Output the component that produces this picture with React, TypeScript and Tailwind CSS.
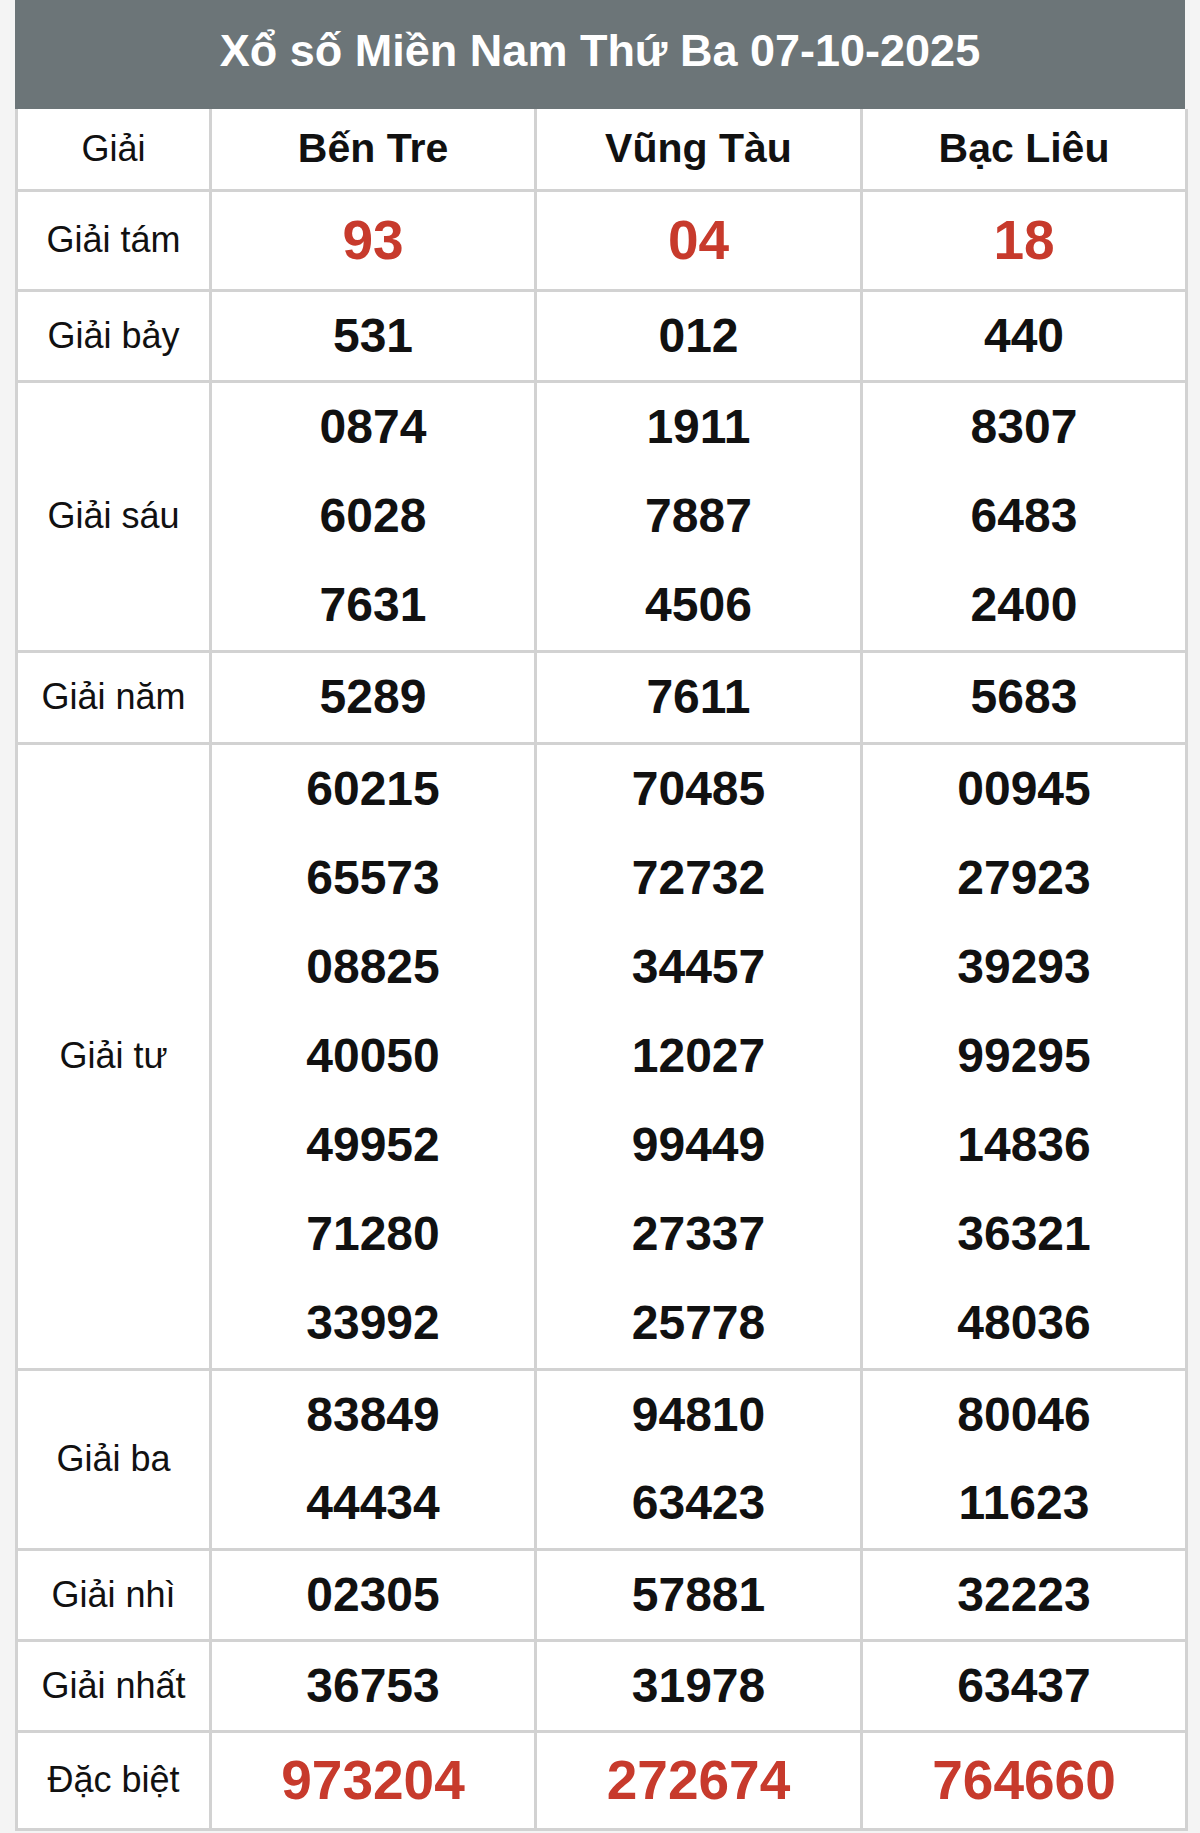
import React from "react";

type Row = {
  label: string;
  values: string[][];
  red?: boolean;
  lineH: string;
};

const rows: Row[] = [
  { label: "Giải tám", values: [["93"], ["04"], ["18"]], red: true, lineH: "h-[97px]" },
  { label: "Giải bảy", values: [["531"], ["012"], ["440"]], lineH: "h-[88px]" },
  {
    label: "Giải sáu",
    values: [
      ["0874", "6028", "7631"],
      ["1911", "7887", "4506"],
      ["8307", "6483", "2400"],
    ],
    lineH: "h-[89px]",
  },
  { label: "Giải năm", values: [["5289"], ["7611"], ["5683"]], lineH: "h-[89px]" },
  {
    label: "Giải tư",
    values: [
      ["60215", "65573", "08825", "40050", "49952", "71280", "33992"],
      ["70485", "72732", "34457", "12027", "99449", "27337", "25778"],
      ["00945", "27923", "39293", "99295", "14836", "36321", "48036"],
    ],
    lineH: "h-[89px]",
  },
  {
    label: "Giải ba",
    values: [
      ["83849", "44434"],
      ["94810", "63423"],
      ["80046", "11623"],
    ],
    lineH: "h-[88.5px]",
  },
  { label: "Giải nhì", values: [["02305"], ["57881"], ["32223"]], lineH: "h-[88px]" },
  { label: "Giải nhất", values: [["36753"], ["31978"], ["63437"]], lineH: "h-[88px]" },
  { label: "Đặc biệt", values: [["973204"], ["272674"], ["764660"]], red: true, lineH: "h-[95px]" },
];

const cities = ["Bến Tre", "Vũng Tàu", "Bạc Liêu"];

const cell = "border-[3px] border-[#d2d2d2] p-0 text-center align-middle";

export default function App() {
  return (
    <div className="min-h-screen bg-[#f4f4f4] px-[15px] font-['Liberation_Sans',Arial,sans-serif]">
      <div className="flex h-[109px] items-center justify-center bg-[#6c7578] pb-[7px]">
        <h1 className="text-[45px] font-bold text-white">Xổ số Miền Nam Thứ Ba 07-10-2025</h1>
      </div>
      <table className="w-full table-fixed border-collapse bg-white">
        <colgroup>
          <col className="w-[194px]" />
          <col className="w-[325px]" />
          <col className="w-[326px]" />
          <col className="w-[325px]" />
        </colgroup>
        <tbody>
          <tr>
            <td className={`${cell} border-t-0 h-[81px] text-[36px] text-[#111]`}>Giải</td>
            {cities.map((c) => (
              <td key={c} className={`${cell} border-t-0 text-[41px] font-bold text-[#111]`}>
                {c}
              </td>
            ))}
          </tr>
          {rows.map((row) => (
            <tr key={row.label}>
              <td className={`${cell} text-[36px] text-[#111]`}>{row.label}</td>
              {row.values.map((col, i) => (
                <td key={i} className={cell}>
                  {col.map((v, j) => (
                    <div
                      key={j}
                      className={`${row.lineH} flex items-center justify-center font-bold ${
                        row.red ? "text-[55px] text-[#c73a2c]" : "text-[48px] text-[#111]"
                      }`}
                    >
                      {v}
                    </div>
                  ))}
                </td>
              ))}
            </tr>
          ))}
        </tbody>
      </table>
    </div>
  );
}
